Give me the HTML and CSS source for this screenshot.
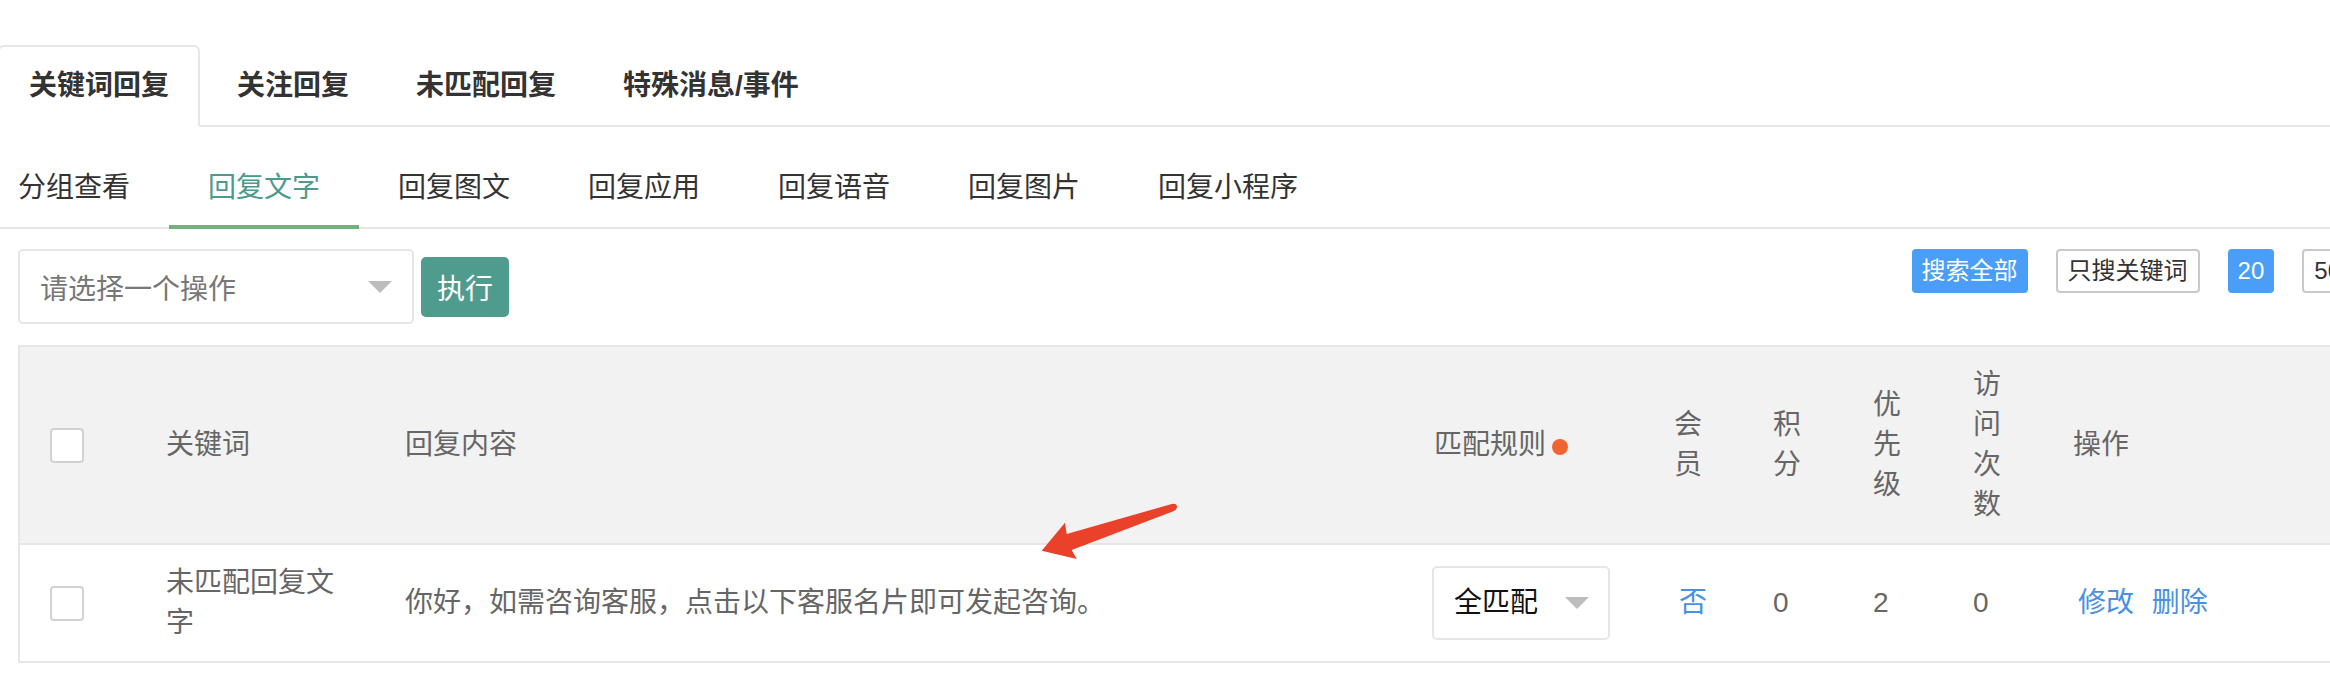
FILE: index.html
```html
<!DOCTYPE html>
<html lang="zh-CN">
<head>
<meta charset="utf-8">
<title>关键词回复</title>
<link rel="stylesheet" href="styles.css">
</head>
<body>
<div class="page">
  <ul class="tabs">
    <li class="tab active">关键词回复</li>
    <li class="tab">关注回复</li>
    <li class="tab">未匹配回复</li>
    <li class="tab">特殊消息/事件</li>
  </ul>

  <ul class="subnav">
    <li class="sub first">分组查看</li>
    <li class="sub active">回复文字</li>
    <li class="sub">回复图文</li>
    <li class="sub">回复应用</li>
    <li class="sub">回复语音</li>
    <li class="sub">回复图片</li>
    <li class="sub">回复小程序</li>
  </ul>

  <div class="toolbar">
    <div class="select action-select"><span>请选择一个操作</span><span class="caret"></span></div>
    <button class="btn-exec" type="button">执行</button>
    <div class="filters">
      <span class="chip chip-blue">搜索全部</span>
      <span class="chip">只搜关键词</span>
      <span class="chip chip-blue">20</span>
      <span class="chip">50</span>
    </div>
  </div>

  <table class="grid">
    <thead>
      <tr>
        <th class="c-check"><span class="check"></span></th>
        <th class="c-kw">关键词</th>
        <th class="c-content">回复内容</th>
        <th class="c-rule">匹配规则<span class="dot"></span></th>
        <th class="c-narrow c-first-narrow">会员</th>
        <th class="c-narrow">积分</th>
        <th class="c-narrow">优先级</th>
        <th class="c-narrow">访问次数</th>
        <th class="c-op">操作</th>
      </tr>
    </thead>
    <tbody>
      <tr>
        <td><span class="check"></span></td>
        <td>未匹配回复文字</td>
        <td>你好，如需咨询客服，点击以下客服名片即可发起咨询。</td>
        <td><div class="select rule-select"><span>全匹配</span><span class="caret"></span></div></td>
        <td><span class="link">否</span></td>
        <td>0</td>
        <td>2</td>
        <td>0</td>
        <td><span class="link">修改</span> <span class="link">删除</span></td>
      </tr>
    </tbody>
  </table>

  <svg class="arrow" viewBox="0 0 160 80" width="160" height="80" aria-hidden="true">
    <path d="M36.7 44 L141.7 14 Q147.5 13.2 146.9 17.4 Q146.3 20.2 144 20.9 L41.7 60 L46.7 69 L11.7 60.7 L35 32.7 Z" fill="#e9412a"/>
  </svg>
</div>
</body>
</html>
```

FILE: styles.css
```css
* {
  box-sizing: border-box;
  margin: 0;
  padding: 0;
}

html, body {
  overflow: hidden;
  background: #fff;
}

body {
  font-family: "Liberation Sans", "Noto Sans CJK SC", sans-serif;
  color: #333;
}

.page {
  position: relative;
  width: 2371px;
  padding-top: 45px;
}

/* top tabs */
.tabs {
  list-style: none;
  display: flex;
  border-bottom: 2px solid #e6e6e6;
}

.tab {
  height: 82px;
  line-height: 78px;
  padding: 0 29px;
  margin-right: 5px;
  margin-bottom: -2px;
  border: 2px solid transparent;
  font-size: 28px;
  font-weight: 700;
  color: #333;
}

.tab.active {
  margin-left: -2px;
  margin-right: 6px;
  border-color: #e6e6e6;
  border-bottom-color: #fff;
  border-radius: 6px 6px 0 0;
  background: #fff;
}

/* sub navigation */
.subnav {
  list-style: none;
  display: flex;
  border-bottom: 2px solid #e6e6e6;
}

.sub {
  padding: 33px 39px 9px;
  line-height: 56px;
  font-size: 28px;
  color: #333;
  border-bottom: 4px solid transparent;
  margin-bottom: -2px;
}

.sub.first {
  padding-left: 18px;
}

.sub.active {
  border-bottom-color: #71b17b;
  color: #4c9a8b;
}

/* toolbar */
.toolbar {
  display: flex;
  align-items: center;
  padding: 0 18px;
  margin-top: 20px;
}

.select {
  display: flex;
  align-items: center;
  justify-content: space-between;
  border: 2px solid #e6e6e6;
  border-radius: 5px;
  background: #fff;
  font-size: 28px;
}

.action-select {
  width: 396px;
  height: 75px;
  padding: 0 20px 0 20px;
  color: #777;
}

.caret {
  width: 0;
  height: 0;
  border-left: 12px solid transparent;
  border-right: 12px solid transparent;
  border-top: 12px solid #bdbdbd;
}

.btn-exec {
  margin-left: 7px;
  width: 88px;
  height: 60px;
  border: 0;
  border-radius: 5px;
  background: #4f9b8d;
  color: #fff;
  font-family: inherit;
  font-size: 28px;
}

.filters {
  margin-left: auto;
  align-self: flex-start;
  display: flex;
  gap: 28px;
}

.chip {
  height: 44px;
  line-height: 40px;
  padding: 0 10px;
  border: 2px solid #c9c9c9;
  border-radius: 4px;
  font-size: 24px;
  color: #333;
  background: #fff;
}

.chip-blue {
  border: 0;
  line-height: 44px;
  background: #4b9ef7;
  color: #fff;
}

/* table */
.grid {
  margin: 21px 0 0 18px;
  width: 2335px;
  table-layout: fixed;
  border-collapse: separate;
  border-spacing: 0;
  border: 2px solid #e6e6e6;
  font-size: 28px;
  color: #666;
}

.grid th {
  background: #f2f2f2;
  font-weight: 400;
  text-align: left;
  line-height: 40px;
  padding: 18px 30px;
  border-bottom: 2px solid #e6e6e6;
  vertical-align: middle;
}

.grid td {
  padding: 18px 30px;
  line-height: 40px;
  vertical-align: middle;
}

.c-check { width: 116px; }
.c-kw { width: 239px; }
.c-content { width: 1029px; }
.c-rule { width: 240px; }
.c-narrow { width: 100px; }
.c-first-narrow { width: 99px; }

.check {
  display: block;
  width: 34px;
  height: 35px;
  border: 2px solid #d2d2d2;
  border-radius: 4px;
  background: #fff;
}

.dot {
  display: inline-block;
  width: 16px;
  height: 16px;
  margin-left: 6px;
  border-radius: 50%;
  background: #f06434;
  vertical-align: middle;
}

.rule-select {
  width: 178px;
  height: 74px;
  margin-left: -2px;
  padding: 0 19px 0 20px;
  color: #111;
}

.link {
  color: #4a90e2;
  margin: 0 5px;
}

.arrow {
  position: absolute;
  left: 1030px;
  top: 490px;
}
```
